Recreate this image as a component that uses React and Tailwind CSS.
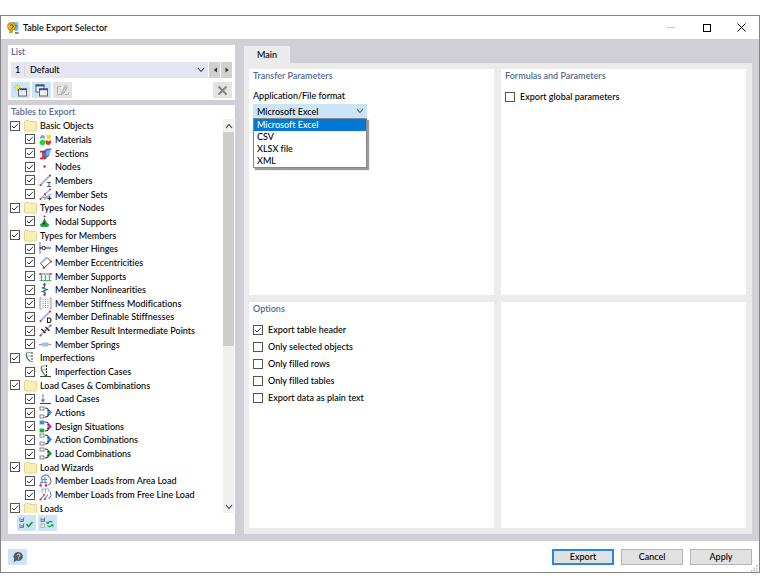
import React from "react";

const TREE = [
  { label: "Basic Objects", icon: "folder", items: [["Materials", "materials"], ["Sections", "sections"], ["Nodes", "nodes"], ["Members", "members"], ["Member Sets", "memberSets"]] },
  { label: "Types for Nodes", icon: "folder", items: [["Nodal Supports", "nodalSupports"]] },
  {
    label: "Types for Members",
    icon: "folder",
    items: [
      ["Member Hinges", "hinges"],
      ["Member Eccentricities", "eccentricities"],
      ["Member Supports", "supports"],
      ["Member Nonlinearities", "nonlinearities"],
      ["Member Stiffness Modifications", "stiffness"],
      ["Member Definable Stiffnesses", "definable"],
      ["Member Result Intermediate Points", "points"],
      ["Member Springs", "springs"],
    ],
  },
  { label: "Imperfections", icon: "imperfections", items: [["Imperfection Cases", "imperfectionCases"]] },
  {
    label: "Load Cases & Combinations",
    icon: "folder",
    items: [
      ["Load Cases", "loadCases"],
      ["Actions", "actions"],
      ["Design Situations", "designSituations"],
      ["Action Combinations", "actions"],
      ["Load Combinations", "loadCombinations"],
    ],
  },
  { label: "Load Wizards", icon: "folder", items: [["Member Loads from Area Load", "areaLoad"], ["Member Loads from Free Line Load", "lineLoad"]] },
  { label: "Loads", icon: "folder", items: [] },
];

function combination(first, second, target) {
  return (
    <>
      <rect x="1" y="1" width="4" height="3" fill={first || "#fff"} stroke={first || "#666"} strokeWidth="0.8" />
      <rect x="1" y="9" width="4" height="3" fill={second || "#fff"} stroke={second || "#666"} strokeWidth="0.8" />
      <path d="M6 2C8.500 2 9.500 3 9.500 5M6 11C8.500 11 9.500 10 9.500 8" fill="none" stroke="#333" strokeWidth="1.200" />
      <path d="M8 4l3 0-1.500 2zM8 9l3 0-1.500-2z" fill="#222" />
      <path d="M8.500 4.800h3l1.500 1.700-1.500 1.700h-3z" fill={target} />
    </>
  );
}

const ICONS = {
  folder: (
    <path d="M.5 3c0-1 .5-1.500 1.500-1.500h3l1 1h5.500q1 0 1 1v7.500q0 1-1 1h-10q-1 0-1-1z" fill="#f8efb4" stroke="#dccb82" strokeWidth="0.8" />
  ),
  materials: (
    <>
      <path d="M1 5.500a2.500 3.500 0 0 1 5 0z" fill="#7d9cf2" />
      <path d="M7 2q2 1 4.500-1q1.500 4-1 5.500q-3.500 0-3.500-4.500" fill="#ece52e" />
      <circle cx="3.500" cy="9.500" r="2.800" fill="#1ee01e" />
      <path d="M6.500 7.500h2l1 1 1-1H12v2q-.5 2.500-2.700 2.500T6.500 9.500z" fill="#ef2c2c" />
    </>
  ),
  sections: (
    <>
      <path d="M4 4l4-2.500h5l-2 2.500-1 5-3 2.500H5z" fill="#4377cf" />
      <path d="M7 4.500l5.500-2.500-2 5-3 2z" fill="#7eb0ef" />
      <path d="M1 4.700h6M4 5v6M1 11.300h6" stroke="#e02424" strokeWidth="1.700" />
    </>
  ),
  nodes: <circle cx="5.500" cy="6.500" r="1.200" fill="#e22" />,
  members: (
    <>
      <path d="M1.500 11L11 1.500" stroke="#9dbbe3" strokeWidth="2" />
      <circle cx="1.500" cy="11" r="1" fill="#e22" />
      <circle cx="11" cy="1.500" r="1" fill="#e22" />
      <path d="M8 8.500h4M10 8.500v4M8 12.500h4" stroke="#444" strokeWidth="0.9" />
    </>
  ),
  memberSets: (
    <>
      <path d="M1.500 11L11 1.500M5 11.500L12 6" stroke="#9dbbe3" strokeWidth="1.600" />
      <path d="M3 10l4-1M5 6l3 3" stroke="#777" strokeWidth="0.7" />
      <circle cx="1.500" cy="11" r="1" fill="#e22" />
      <circle cx="11" cy="1.500" r="1" fill="#e22" />
      <circle cx="6" cy="6" r="1" fill="#e22" />
      <path d="M8.500 10.300h4M10.500 8.300v4" stroke="#333" strokeWidth="1.200" />
    </>
  ),
  nodalSupports: (
    <>
      <path d="M5.500 3l2.500 5H3z" fill="#2a9b50" />
      <ellipse cx="5.500" cy="10" rx="4.500" ry="2.200" fill="#25a04c" />
      <path d="M3.500 9l2-3 1 4z" fill="#0c5229" />
      <circle cx="5.500" cy="1.500" r="1.100" fill="#e22" />
    </>
  ),
  hinges: (
    <>
      <path d="M1 0v12" stroke="#9fc0ea" strokeWidth="2" />
      <path d="M6 6h6" stroke="#9fc0ea" strokeWidth="2.500" />
      <path d="M1 6h11" stroke="#666" strokeWidth="0.8" />
      <circle cx="1.500" cy="6" r="1.200" fill="#e22" />
      <circle cx="4.700" cy="6" r="1.700" fill="#fff" stroke="#222" strokeWidth="1" />
    </>
  ),
  eccentricities: (
    <>
      <path d="M1.500 7.500L8 1.500l4 4-6.500 6z" fill="#fff" stroke="#333" strokeWidth="0.9" />
      <path d="M1.500 7.500L8 1.500" stroke="#9dbbe3" strokeWidth="2" />
      <circle cx="4.800" cy="11.800" r="1.100" fill="#e22" />
      <circle cx="12" cy="5.500" r="1.100" fill="#e22" />
    </>
  ),
  supports: (
    <>
      <path d="M1 4h11" stroke="#9fc0ea" strokeWidth="2" />
      <path d="M2.500 5v5M6.500 5v5M10.500 5v5M.5 10.500h12M1.500 7h2M5.500 7h2M9.500 7h2" stroke="#4bb572" strokeWidth="1.200" />
      <circle cx="1.200" cy="4" r="1.100" fill="#e22" />
      <circle cx="11.800" cy="4" r="1.100" fill="#e22" />
    </>
  ),
  nonlinearities: (
    <>
      <path d="M5.500 1v3L3.500 5l4.500 1.500-4.500 2 2.500 1v2" fill="none" stroke="#17777c" strokeWidth="1.300" />
      <circle cx="5.500" cy="1.300" r="1.200" fill="#e22" />
      <circle cx="5.500" cy="11.700" r="1.200" fill="#e22" />
    </>
  ),
  stiffness: (
    <>
      <path d="M2.500 1H1v11h1.500M10.500 1H12v11h-1.500" fill="none" stroke="#888" strokeWidth="0.9" />
      <path d="M4 2v9M6.500 2v9M9 2v9" stroke="#777" strokeWidth="0.9" strokeDasharray="1 1" />
    </>
  ),
  definable: (
    <>
      <path d="M1.500 11L11 1.500" stroke="#9dbbe3" strokeWidth="2" />
      <circle cx="1.500" cy="11" r="1" fill="#e22" />
      <circle cx="11" cy="1.500" r="1" fill="#e22" />
      <path d="M8.500 8h1.500q2 0 2 2.200t-2 2.300H8.500z" fill="#fff" stroke="#222" strokeWidth="1.100" />
    </>
  ),
  points: (
    <>
      <path d="M1.500 11.500L11.500 1.500" stroke="#8fb2df" strokeWidth="1.700" />
      <path d="M2.500 5l4 4M6.500 3l4 4" stroke="#222" strokeWidth="1.300" />
      <circle cx="1.500" cy="11.500" r="1.100" fill="#e22" />
      <circle cx="6.500" cy="6.500" r="0.8" fill="#e22" />
      <circle cx="11.500" cy="1.500" r="1.100" fill="#e22" />
    </>
  ),
  springs: (
    <>
      <path d="M0 6.500h12" stroke="#999" strokeWidth="0.8" />
      <rect x="2.500" y="4.500" width="7" height="4" rx="1" fill="#9fc0ea" />
      <circle cx="1" cy="6.500" r="0.8" fill="#c66" />
      <circle cx="11.500" cy="6.500" r="0.8" fill="#c66" />
    </>
  ),
  imperfections: (
    <>
      <path d="M6.500 10.500Q.5 6 3 1.500" fill="none" stroke="#22914a" strokeWidth="1.200" />
      <path d="M8 1v10" stroke="#444" strokeWidth="1.100" strokeDasharray="2 1" />
      <path d="M3 1.500h5M3 5h4" stroke="#777" strokeWidth="0.7" />
    </>
  ),
  imperfectionCases: (
    <>
      <path d="M7 11Q.5 5 3 1" fill="none" stroke="#22914a" strokeWidth="1.200" />
      <path d="M7.500 0v11" stroke="#333" strokeWidth="1.100" strokeDasharray="2 1" />
      <path d="M3 1h5M3 5h4" stroke="#777" strokeWidth="0.7" />
      <path d="M1 11.500h11" stroke="#444" strokeWidth="1.100" />
    </>
  ),
  loadCases: (
    <>
      <path d="M4 2v7" stroke="#6d97dc" strokeWidth="1.200" />
      <path d="M1.800 7.500h4.400L4 10.800z" fill="#4b7fd0" />
      <path d="M1 11.500h11" stroke="#444" strokeWidth="1.100" />
    </>
  ),
  actions: combination(null, null, "#3f86ee"),
  designSituations: combination("#3f86ee", "#16b52e", "#f01ae8"),
  loadCombinations: combination(null, null, "#16a52e"),
  areaLoad: (
    <>
      <path d="M2 4Q6-1 10 2M3 4v4M6 3v5M2 5.500h6M1 8.500h7" fill="none" stroke="#5f8dd6" strokeWidth="1.200" />
      <path d="M9.500 2q2.800 2.500 2.500 5.500T9 11" fill="none" stroke="#555" strokeWidth="0.9" />
      <path d="M2 8v3M7 8v3" stroke="#777" strokeWidth="0.8" />
      <circle cx="1.500" cy="11.500" r="1.200" fill="#e22" />
      <circle cx="7" cy="11.500" r="1.200" fill="#e22" />
    </>
  ),
  lineLoad: (
    <>
      <path d="M3 1h7M3 1v4M6.500 1v4M10 1v3" stroke="#8dabdf" strokeWidth="1.100" />
      <path d="M1.500 11.500l4-5M5.500 11.500l3.500-5" stroke="#5f8dd6" strokeWidth="1.200" />
      <path d="M11.500 4q2 4-2 7" fill="none" stroke="#555" strokeWidth="0.9" />
      <circle cx="1.500" cy="11.500" r="1.100" fill="#e22" />
      <circle cx="6" cy="11" r="1" fill="#e22" />
      <circle cx="5" cy="6.500" r="0.9" fill="#e22" />
    </>
  ),
};

function TreeIcon({ name }) {
  return (
    <svg viewBox="0 0 13 13" className="size-[13px] shrink-0" aria-hidden="true">
      {ICONS[name]}
    </svg>
  );
}

function Checkbox({ checked }) {
  return (
    <span className="grid size-[10px] shrink-0">
      <input
        type="checkbox"
        defaultChecked={checked}
        className="peer col-start-1 row-start-1 size-[10px] appearance-none border border-[#555] bg-white"
      />
      <svg viewBox="0 0 10 10" className="pointer-events-none invisible col-start-1 row-start-1 size-[10px] peer-checked:visible" aria-hidden="true">
        <path d="M2 5L4 7L8 2.800" fill="none" stroke="#333" strokeWidth="1" />
      </svg>
    </span>
  );
}

function TreeRow({ label, icon, nested }) {
  return (
    <li className={nested ? "flex items-center pl-[17px]" : "flex items-center pl-[2px]"}>
      <label className="flex items-center whitespace-nowrap">
        <Checkbox checked />
        <span className="w-[4px]" />
        <TreeIcon name={icon} />
        <span className="pl-[3px]">{label}</span>
      </label>
    </li>
  );
}

function Option({ label, checked }) {
  return (
    <label className="flex h-[17px] items-center gap-[5px] whitespace-nowrap">
      <Checkbox checked={checked} />
      <span>{label}</span>
    </label>
  );
}

function Panel({ title, children }) {
  return (
    <section className="min-w-0 bg-white px-[4px]">
      {title && <h2 className="h-[14px] leading-[14px] font-semibold text-[#566a93]">{title}</h2>}
      {children}
    </section>
  );
}

function ToolButton({ label, active, children }) {
  return (
    <button
      type="button"
      aria-label={label}
      className={
        active
          ? "flex h-[16px] w-[19px] items-center justify-center bg-[#cce4f7]"
          : "flex h-[16px] w-[19px] items-center justify-center bg-[#e3e3e3]"
      }
    >
      {children}
    </button>
  );
}

function Chevron({ className, d }) {
  return (
    <svg viewBox="0 0 8 6" className={className} aria-hidden="true">
      <path d={d} fill="none" stroke="currentColor" strokeWidth="1.100" />
    </svg>
  );
}

function TitleBar() {
  return (
    <header className="flex h-[23px] shrink-0 items-center bg-white pl-[6px]">
      <svg viewBox="0 0 12 12" className="size-[12px]" aria-hidden="true">
        <path d="M4 0h7.500v9H8z" fill="#8ec6ee" />
        <path d="M9 2v6M7 4h4" stroke="#3d82bd" strokeWidth="0.8" />
        <circle cx="4.500" cy="4.500" r="4" fill="#e9b61c" stroke="#8a6a10" strokeWidth="0.6" />
        <path d="M3 6.500L2 11h3l2-4z" fill="#d39a12" />
        <path d="M3 3.500q1.500-1.500 3 0t-1.500 3" fill="none" stroke="#5c4608" strokeWidth="1" />
        <path d="M8 11h3.500" stroke="#333" strokeWidth="1.200" />
      </svg>
      <h1 className="flex-1 pl-[4px] text-black">Table Export Selector</h1>
      <button type="button" aria-label="Minimize" className="flex h-[23px] w-[35px] items-center justify-center text-[#c4c4c4]">
        <svg viewBox="0 0 9 9" className="size-[9px]" aria-hidden="true"><path d="M0 4.500h8" stroke="currentColor" /></svg>
      </button>
      <button type="button" aria-label="Maximize" className="flex h-[23px] w-[35px] items-center justify-center text-black">
        <svg viewBox="0 0 9 9" className="size-[9px]" aria-hidden="true"><rect x="1.500" y="1.500" width="7" height="7" fill="none" stroke="currentColor" /></svg>
      </button>
      <button type="button" aria-label="Close" className="flex h-[23px] w-[35px] items-center justify-center text-black">
        <svg viewBox="0 0 9 9" className="size-[9px]" aria-hidden="true"><path d="M.5 .5l8 8M8.500 .5l-8 8" stroke="currentColor" /></svg>
      </button>
    </header>
  );
}

function ListPanel() {
  return (
    <section className="h-[55px] shrink-0 bg-white px-[3px]">
      <h2 className="h-[17px] leading-[14px] font-semibold text-[#566a93]">List</h2>
      <div className="flex h-[16px] gap-px">
        <div className="grid flex-1">
          <select aria-label="List entry" className="sr-only col-start-1 row-start-1">
            <option>1 Default</option>
          </select>
          <div className="col-start-1 row-start-1 flex items-center bg-[#e6e6f3] text-black">
            <span className="w-[14px] border-r border-[#d6d6e4] pl-[4px]">1</span>
            <span className="flex-1 pl-[5px]">Default</span>
            <Chevron className="mr-[3px] h-[6px] w-[8px] text-[#444]" d="M1 1l3 3.500L7 1" />
          </div>
        </div>
        <button type="button" aria-label="Previous" className="flex w-[11px] items-center justify-center bg-[#d0d0d0]">
          <svg viewBox="0 0 4 6" className="h-[6px] w-[4px]" aria-hidden="true"><path d="M4 .5v5L.8 3z" fill="#333" /></svg>
        </button>
        <button type="button" aria-label="Next" className="flex w-[11px] items-center justify-center bg-[#d0d0d0]">
          <svg viewBox="0 0 4 6" className="h-[6px] w-[4px]" aria-hidden="true"><path d="M.5 .5v5L3.700 3z" fill="#333" /></svg>
        </button>
      </div>
      <div className="mt-[4px] flex gap-[2px]">
        <ToolButton label="New" active>
          <svg viewBox="0 0 14 13" className="h-[13px] w-[14px]" aria-hidden="true">
            <rect x="4.500" y="5" width="8" height="7" fill="#eee" stroke="#666" />
            <path d="M4 5.300h9" stroke="#3a4c90" strokeWidth="1.800" />
            <path d="M3.500 0v7M0 3.500h7M1 1l5 5M6 1L1 6" stroke="#e2cf00" strokeWidth="1" />
            <circle cx="3.500" cy="3.500" r="1.300" fill="#fff34a" />
          </svg>
        </ToolButton>
        <ToolButton label="Copy" active>
          <svg viewBox="0 0 14 13" className="h-[13px] w-[14px]" aria-hidden="true">
            <rect x="1" y="1" width="8" height="7" fill="#eee" stroke="#666" />
            <path d="M.5 1.500h9" stroke="#3a4c90" strokeWidth="1.800" />
            <rect x="4.500" y="5" width="8" height="7" fill="#eee" stroke="#666" />
            <path d="M4 5.300h9" stroke="#3a4c90" strokeWidth="1.800" />
          </svg>
        </ToolButton>
        <ToolButton label="Rename">
          <svg viewBox="0 0 14 13" className="h-[13px] w-[14px]" aria-hidden="true">
            <path d="M5 2.500H1.500v8h4M9 10.500h3.500v-2" fill="none" stroke="#b2b2b2" />
            <path d="M10 1L6 8l-.5 2.500L8 9l3.500-6.500" fill="#d0d0d0" stroke="#a3a3a3" strokeWidth="0.9" />
          </svg>
        </ToolButton>
        <span className="flex-1" />
        <ToolButton label="Delete">
          <svg viewBox="0 0 11 11" className="size-[11px]" aria-hidden="true">
            <path d="M1.500 1.500l8 8M9.500 1.500l-8 8" stroke="#858585" strokeWidth="2" />
          </svg>
        </ToolButton>
      </div>
    </section>
  );
}

function TablesPanel() {
  return (
    <section className="flex min-h-0 flex-1 flex-col bg-white">
      <h2 className="h-[14px] shrink-0 pl-[3px] leading-[14px] font-semibold text-[#566a93]">Tables to Export</h2>
      <div className="flex min-h-0 flex-1">
        <div className="min-w-0 flex-1 overflow-hidden">
          <ul className="grid h-[396px] auto-rows-fr leading-[13px] text-black">
            {TREE.map((group) => (
              <React.Fragment key={group.label}>
                <TreeRow label={group.label} icon={group.icon} />
                {group.items.map(([label, icon]) => (
                  <TreeRow key={label} label={label} icon={icon} nested />
                ))}
              </React.Fragment>
            ))}
          </ul>
        </div>
        <div className="mr-px flex w-[11px] flex-col items-center bg-[#f0f0f0] text-[#333]">
          <Chevron className="mt-[4px] mb-[3px] h-[6px] w-[8px]" d="M1 5l3-3.500L7 5" />
          <span className="h-[214px] w-full bg-[#cdcdcd]" />
          <span className="flex-1" />
          <Chevron className="mb-[3px] h-[6px] w-[8px]" d="M1 1l3 3.500L7 1" />
        </div>
      </div>
      <div className="flex shrink-0 gap-[2px] pt-[2px] pb-[3px] pl-[9px]">
        <ToolButton label="Select all" active>
          <svg viewBox="0 0 15 12" className="h-[12px] w-[15px]" aria-hidden="true">
            <path d="M1 1v3.500h3.500V1M1 7v3.500h3.500V7M2 2l1 1.500L5 .5M2 8l1 1.500L5 6.500" fill="none" stroke="#666" strokeWidth="0.8" />
            <path d="M7.500 7l2 2.500L13.500 5" fill="none" stroke="#14a43c" strokeWidth="1.700" />
          </svg>
        </ToolButton>
        <ToolButton label="Invert selection" active>
          <svg viewBox="0 0 15 12" className="h-[12px] w-[15px]" aria-hidden="true">
            <path d="M1 1v3.500h3.500V1M2 2l1 1.500L5 .5" fill="none" stroke="#666" strokeWidth="0.8" />
            <rect x="1" y="7" width="3.500" height="3.500" fill="#eee" stroke="#aaa" strokeWidth="0.8" />
            <path d="M7.500 6q2.500-2.500 5-.8M12.500 8.300q-2.500 2.300-5 .5" fill="none" stroke="#2aa552" strokeWidth="1.300" />
            <path d="M6.500 4v3h3zM13.500 10.300V7.300h-3z" fill="#2aa552" />
          </svg>
        </ToolButton>
      </div>
    </section>
  );
}

const FORMATS = ["Microsoft Excel", "CSV", "XLSX file", "XML"];

function FormatPicker() {
  return (
    <div className="relative w-[114px]">
      <select
        id="format"
        defaultValue={FORMATS[0]}
        className="block h-[15px] w-full appearance-none bg-[#cce4f7] pl-[4px] leading-[15px] text-black"
      >
        {FORMATS.map((format) => (
          <option key={format}>{format}</option>
        ))}
      </select>
      <Chevron className="pointer-events-none absolute top-[4px] right-[3px] h-[6px] w-[8px] text-[#555]" d="M1 1l3 3.500L7 1" />
      <ul
        role="listbox"
        aria-label="Formats"
        className="absolute top-[14px] left-0 w-full border border-[#888] bg-white leading-[12px] text-black shadow-[2px_2px_1px_#9a9a9a]"
      >
        {FORMATS.map((format, index) => (
          <li key={format} role="option" aria-selected={index === 0} className="pl-[3px] aria-selected:bg-[#0078d7] aria-selected:text-white">
            {format}
          </li>
        ))}
      </ul>
    </div>
  );
}

function MainTab() {
  return (
    <main className="flex min-w-0 flex-1 flex-col">
      <div role="tablist" className="flex pt-px">
        <button type="button" role="tab" aria-selected="true" className="h-[17px] w-[46px] bg-[#ebebeb] text-black">
          Main
        </button>
      </div>
      <div className="grid flex-1 grid-cols-2 grid-rows-2 gap-[7px] bg-[#ebebeb] py-[6px] pr-[6px] pl-[5px]">
        <Panel title="Transfer Parameters">
          <label htmlFor="format" className="mt-[6px] mb-px block h-[14px] leading-[14px] text-black">
            Application/File format
          </label>
          <FormatPicker />
        </Panel>
        <Panel title="Formulas and Parameters">
          <div className="pt-[5px] text-black">
            <Option label="Export global parameters" />
          </div>
        </Panel>
        <Panel title="Options">
          <div className="pt-[5px] text-black">
            <Option label="Export table header" checked />
            <Option label="Only selected objects" />
            <Option label="Only filled rows" />
            <Option label="Only filled tables" />
            <Option label="Export data as plain text" />
          </div>
        </Panel>
        <Panel />
      </div>
    </main>
  );
}

function Footer() {
  return (
    <footer className="flex h-[31px] shrink-0 items-center gap-[7px] bg-white pr-[7px] pl-[7px]">
      <button type="button" aria-label="Help" className="flex h-[16px] w-[19px] items-center justify-center bg-[#cce4f7]">
        <svg viewBox="0 0 12 12" className="size-[12px]" aria-hidden="true">
          <path d="M6.500 1a4.500 4.500 0 1 1-2 8.600L1.500 11.500l.8-3.500A4.500 4.500 0 0 1 6.500 1z" fill="#58595b" />
          <path d="M5 4.300q.3-1.300 1.700-1.300T8 4.300q0 .9-1.300 1.500v.8M6.700 7.400v1" fill="none" stroke="#dcebf8" strokeWidth="1" />
        </svg>
      </button>
      <span className="flex-1" />
      <button type="button" className="h-[16px] w-[62px] border-2 border-[#2a86dc] bg-[#e1e1e1] leading-[12px] text-black">Export</button>
      <button type="button" className="h-[16px] w-[62px] border border-[#b4b4b4] bg-[#e1e1e1] leading-[14px] text-black">Cancel</button>
      <div className="relative">
        <button type="button" className="block h-[16px] w-[62px] border border-[#b4b4b4] bg-[#e1e1e1] leading-[14px] text-black">Apply</button>
        <svg viewBox="0 0 7 7" className="absolute top-full left-full -ml-px size-[7px]" aria-hidden="true">
          <path d="M5 0h1.500v1.500H5zM5 2.500h1.500V4H5zM5 5h1.500v1.500H5zM2.500 2.500H4V4H2.500zM2.500 5H4v1.500H2.500zM0 5h1.500v1.500H0z" fill="#b5b5b5" />
        </svg>
      </div>
    </footer>
  );
}

export default function App() {
  return (
    <div className="h-screen bg-white py-[15px] font-['Lato','Noto_Sans',sans-serif] text-[9px] font-medium [font-variant-ligatures:none]">
      <div className="flex h-full flex-col border border-[#858585]">
        <TitleBar />
        <div className="flex min-h-0 flex-1 gap-[9px] bg-[#d0cfd5] px-[7px] pt-[6px] pb-[7px]">
          <div className="flex w-[227px] shrink-0 flex-col gap-[5px]">
            <ListPanel />
            <TablesPanel />
          </div>
          <MainTab />
        </div>
        <Footer />
      </div>
    </div>
  );
}
